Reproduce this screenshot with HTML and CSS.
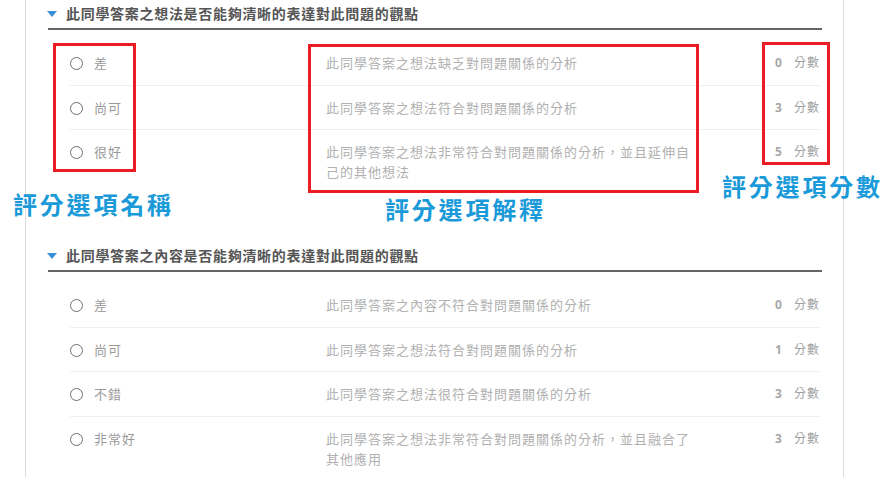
FILE: index.html
```html
<!DOCTYPE html>
<html lang="zh-Hant">
<head>
    <meta charset="UTF-8">
    <meta name="viewport" content="width=device-width, initial-scale=1.0">
    <title>評分選項</title>
    <link rel="stylesheet" href="styles.css">
</head>
<body>
    <div class="page">
        <div class="card">
            <section class="criterion">
                <h3 class="criterion-title"><span class="caret"></span>此同學答案之想法是否能夠清晰的表達對此問題的觀點</h3>
                <ul class="options">
                    <li class="option">
                        <span class="radio"></span>
                        <span class="opt-name">差</span>
                        <span class="opt-desc">此同學答案之想法缺乏對問題關係的分析</span>
                        <span class="opt-score"><b>0</b>分數</span>
                    </li>
                    <li class="option">
                        <span class="radio"></span>
                        <span class="opt-name">尚可</span>
                        <span class="opt-desc">此同學答案之想法符合對問題關係的分析</span>
                        <span class="opt-score"><b>3</b>分數</span>
                    </li>
                    <li class="option">
                        <span class="radio"></span>
                        <span class="opt-name">很好</span>
                        <span class="opt-desc">此同學答案之想法非常符合對問題關係的分析，並且延伸自己的其他想法</span>
                        <span class="opt-score"><b>5</b>分數</span>
                    </li>
                </ul>
            </section>

            <section class="criterion">
                <h3 class="criterion-title"><span class="caret"></span>此同學答案之內容是否能夠清晰的表達對此問題的觀點</h3>
                <ul class="options">
                    <li class="option">
                        <span class="radio"></span>
                        <span class="opt-name">差</span>
                        <span class="opt-desc">此同學答案之內容不符合對問題關係的分析</span>
                        <span class="opt-score"><b>0</b>分數</span>
                    </li>
                    <li class="option">
                        <span class="radio"></span>
                        <span class="opt-name">尚可</span>
                        <span class="opt-desc">此同學答案之想法符合對問題關係的分析</span>
                        <span class="opt-score"><b>1</b>分數</span>
                    </li>
                    <li class="option">
                        <span class="radio"></span>
                        <span class="opt-name">不錯</span>
                        <span class="opt-desc">此同學答案之想法很符合對問題關係的分析</span>
                        <span class="opt-score"><b>3</b>分數</span>
                    </li>
                    <li class="option">
                        <span class="radio"></span>
                        <span class="opt-name">非常好</span>
                        <span class="opt-desc">此同學答案之想法非常符合對問題關係的分析，並且融合了其他應用</span>
                        <span class="opt-score"><b>3</b>分數</span>
                    </li>
                </ul>
            </section>
        </div>

        <!-- 標示框與說明文字 -->
        <div class="mark mark-name"></div>
        <div class="mark mark-desc"></div>
        <div class="mark mark-score"></div>
        <div class="note note-name">評分選項名稱</div>
        <div class="note note-desc">評分選項解釋</div>
        <div class="note note-score">評分選項分數</div>
    </div>
</body>
</html>
```

FILE: styles.css
```css
body {
    margin: 0;
    background-color: #fff;
    font-family: "Open Sans", "Noto Sans CJK TC", sans-serif;
}
.page {
    position: relative;
    height: 477px;
    overflow: hidden;
}
.card {
    box-sizing: border-box;
    width: 819px;
    height: 477px;
    margin-left: 25px;
    border-left: 1px solid #dcdcdc;
    border-right: 1px solid #dcdcdc;
}
.criterion {
    padding: 0 21px 0 22px;
    margin-bottom: 48.5px;
}
.criterion-title {
    display: flex;
    align-items: center;
    gap: 9px;
    margin: 0;
    padding: 4px 0 4px 0;
    border-bottom: 2px solid #666;
    font-size: 14px;
    line-height: 20px;
    letter-spacing: 0.7px;
    font-weight: bold;
    color: #555;
}
.caret {
    width: 0;
    height: 0;
    margin-left: -1px;
    border-left: 5px solid transparent;
    border-right: 5px solid transparent;
    border-top: 6px solid #3a8fd8;
}
.options {
    list-style: none;
    margin: 11px 2px 0 22px;
    padding: 0;
}
.option {
    display: flex;
    align-items: flex-start;
    padding: 12px 0 11.5px 0;
    border-bottom: 1px solid #efefef;
    font-size: 13px;
    line-height: 20px;
    letter-spacing: 1px;
}
.option:last-child {
    border-bottom: none;
}
.radio {
    box-sizing: border-box;
    flex: none;
    width: 13px;
    height: 13px;
    margin-top: 4px;
    border: 1.5px solid #707070;
    border-radius: 50%;
}
.opt-name {
    flex: none;
    width: 232px;
    margin-left: 11px;
    color: #9a9a9a;
}
.opt-desc {
    flex: none;
    width: 370px;
    color: #b0b0b0;
}
.opt-score {
    display: flex;
    gap: 12px;
    margin-left: auto;
    font-size: 12px;
    color: #a0a0a0;
}
.opt-score b {
    color: #a8a8a8;
    letter-spacing: 0;
}
.mark {
    position: absolute;
    box-sizing: border-box;
    border: 3px solid #ec1c24;
}
.mark-name {
    left: 53px;
    top: 43px;
    width: 83px;
    height: 129px;
}
.mark-desc {
    left: 308px;
    top: 44px;
    width: 391px;
    height: 149px;
}
.mark-score {
    left: 762px;
    top: 42px;
    width: 68px;
    height: 123px;
}
.note {
    position: absolute;
    font-size: 24px;
    line-height: 24px;
    font-weight: 600;
    letter-spacing: 2.8px;
    color: #1a9ad9;
    white-space: nowrap;
}
.note-name {
    left: 13px;
    top: 193px;
}
.note-desc {
    left: 385px;
    top: 198px;
}
.note-score {
    left: 722px;
    top: 175px;
}
```
